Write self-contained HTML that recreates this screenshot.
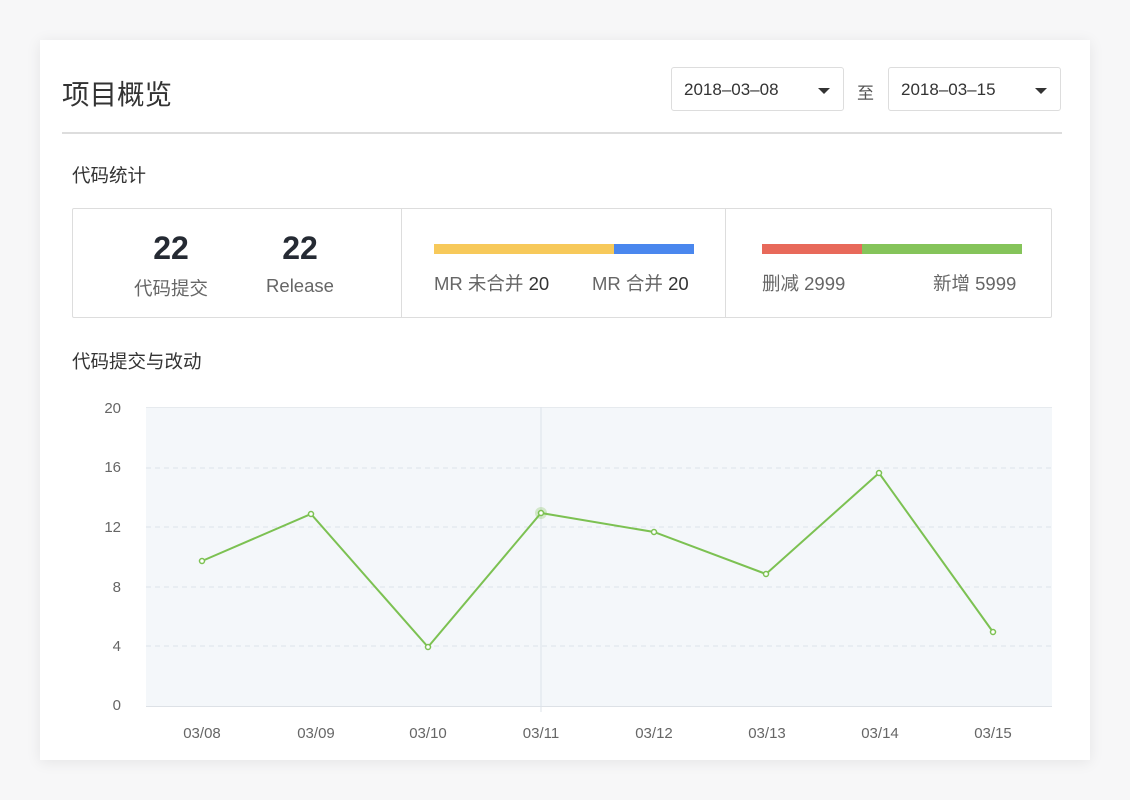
<!DOCTYPE html>
<html><head><meta charset="utf-8"><style>
body{margin:0;width:1130px;height:800px;background:#f7f7f8;font-family:"Liberation Sans","Noto Sans CJK SC",sans-serif;position:relative;overflow:hidden}
.card{position:absolute;left:40px;top:40px;width:1050px;height:720px;background:#fff;box-shadow:0 2px 14px rgba(0,0,0,.08)}
.a{position:absolute;white-space:nowrap}
.sel{position:absolute;top:67px;height:44px;border:1px solid #ddd;border-radius:3px;background:#fff;box-sizing:border-box}
.sel span{position:absolute;left:12px;top:12px;font-size:17px;color:#333}
.sel i{position:absolute;right:13px;top:20px;width:0;height:0;border-left:6px solid transparent;border-right:6px solid transparent;border-top:6px solid #333}
</style></head><body>
<div class="card"></div>
<div class="a" style="left:62px;top:72px;font-size:27.5px;color:#333">项目概览</div>
<div class="sel" style="left:671px;width:173px"><span>2018–03–08</span><i></i></div>
<div class="a" style="left:857px;top:79px;font-size:17px;color:#555">至</div>
<div class="sel" style="left:888px;width:173px"><span>2018–03–15</span><i></i></div>
<div class="a" style="left:62px;top:132px;width:1000px;height:2px;background:#ddd"></div>
<div class="a" style="left:72px;top:162px;font-size:18.5px;color:#333">代码统计</div>
<div class="a" style="left:72px;top:208px;width:978px;height:108px;border:1px solid #ddd;border-radius:2px"></div>
<div class="a" style="left:401px;top:209px;width:1px;height:108px;background:#ddd"></div>
<div class="a" style="left:725px;top:209px;width:1px;height:108px;background:#ddd"></div>
<div class="a" style="left:131px;top:230px;width:80px;text-align:center;font-size:32px;font-weight:bold;color:#252a33">22</div>
<div class="a" style="left:131px;top:275px;width:80px;text-align:center;font-size:18.5px;color:#666">代码提交</div>
<div class="a" style="left:260px;top:230px;width:80px;text-align:center;font-size:32px;font-weight:bold;color:#252a33">22</div>
<div class="a" style="left:260px;top:275px;width:80px;text-align:center;font-size:18.5px;color:#666">Release</div>
<div class="a" style="left:434px;top:244px;width:180px;height:10px;background:#f7c95a"></div>
<div class="a" style="left:614px;top:244px;width:80px;height:10px;background:#4a87ee"></div>
<div class="a" style="left:434px;top:270px;font-size:18.5px;color:#666">MR 未合并 <span style="color:#333">20</span></div>
<div class="a" style="left:592px;top:270px;font-size:18.5px;color:#666">MR 合并 <span style="color:#333">20</span></div>
<div class="a" style="left:762px;top:244px;width:100px;height:10px;background:#e8695a"></div>
<div class="a" style="left:862px;top:244px;width:160px;height:10px;background:#85c45a"></div>
<div class="a" style="left:762px;top:270px;font-size:18.5px;color:#666">删减 2999</div>
<div class="a" style="left:933px;top:270px;font-size:18.5px;color:#666">新增 5999</div>
<div class="a" style="left:72px;top:348px;font-size:18.5px;color:#333">代码提交与改动</div>
<svg class="a" style="left:0;top:0" width="1130" height="800">
<rect x="146" y="407" width="906" height="299" fill="#f4f7fa"/>
<g stroke="#dde3ea" stroke-dasharray="5,4"><line x1="146" x2="1052" y1="468" y2="468"/><line x1="146" x2="1052" y1="527" y2="527"/><line x1="146" x2="1052" y1="587" y2="587"/><line x1="146" x2="1052" y1="646" y2="646"/></g>
<line x1="146" x2="1052" y1="407.5" y2="407.5" stroke="#e6eaee"/>
<line x1="146" x2="1052" y1="706.5" y2="706.5" stroke="#dde1e6"/>
<line x1="541" x2="541" y1="407" y2="712" stroke="#dde3ea"/>
<circle cx="541" cy="513" r="6" fill="#85c45a" opacity=".3"/>
<polyline fill="none" stroke="#7cc152" stroke-width="2" points="202,561 311,514 428,647 541,513 654,532 766,574 879,473 993,632"/>
<g fill="#fff" stroke="#7cc152" stroke-width="1.5"><circle cx="202" cy="561" r="2.5"/><circle cx="311" cy="514" r="2.5"/><circle cx="428" cy="647" r="2.5"/><circle cx="541" cy="513" r="2.5"/><circle cx="654" cy="532" r="2.5"/><circle cx="766" cy="574" r="2.5"/><circle cx="879" cy="473" r="2.5"/><circle cx="993" cy="632" r="2.5"/></g>
<g font-family="Liberation Sans" font-size="15" fill="#666" text-anchor="end"><text x="121" y="413">20</text><text x="121" y="472">16</text><text x="121" y="532">12</text><text x="121" y="592">8</text><text x="121" y="651">4</text><text x="121" y="710">0</text></g>
<g font-family="Liberation Sans" font-size="15" fill="#666" text-anchor="middle"><text x="202" y="738">03/08</text><text x="316" y="738">03/09</text><text x="428" y="738">03/10</text><text x="541" y="738">03/11</text><text x="654" y="738">03/12</text><text x="767" y="738">03/13</text><text x="880" y="738">03/14</text><text x="993" y="738">03/15</text></g>
</svg>
</body></html>
